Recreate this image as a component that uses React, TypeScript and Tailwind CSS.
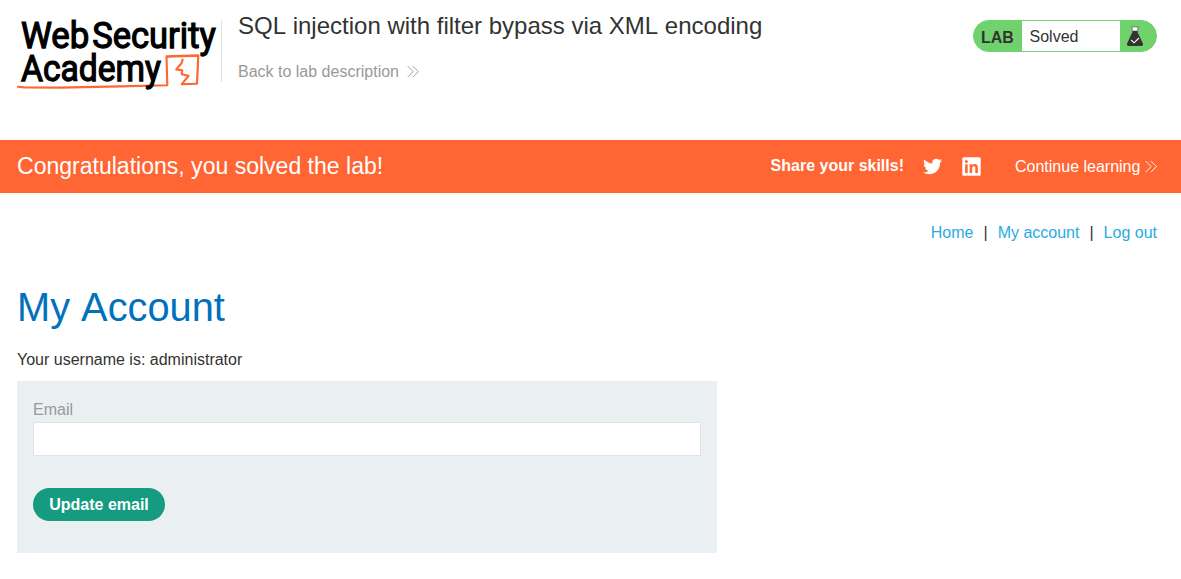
import React from "react";

function Logo() {
  const word = {
    fontFamily: "Roboto, 'Liberation Sans', sans-serif",
    fontWeight: 400,
    stroke: "#000",
    strokeWidth: 1.25,
    lengthAdjust: "spacingAndGlyphs" as const,
  };
  return (
    <svg width="204" height="76" viewBox="17 17 204 76" className="block shrink-0 overflow-visible" role="img" aria-label="Web Security Academy">
      <text x="21" y="48.2" fontSize="37" textLength="68.4" {...word}>Web</text>
      <text x="92.2" y="48.2" fontSize="37" textLength="123.6" {...word}>Security</text>
      <g fill="none" stroke="#ff6633" strokeLinejoin="round" strokeLinecap="round">
        <path d="M18 86.8 L24 87.4 L60 87.6 L120 86.4 L167.3 85.3 L166.5 56.2 L198.3 55.3 L197 83.8 L181.8 84.2 L188.6 75.8 L181.6 74.2 L182.3 70.4 L176.2 69.4 L181.7 63 L182.6 59.6" strokeWidth="2.1" />
        <path d="M167 57.2 L198 56 M183 84.3 L197 83.2 M198 56 L197.2 83" strokeWidth="1.3" />
      </g>
      <text x="21" y="80.7" fontSize="36.5" textLength="140" {...word}>Academy</text>
    </svg>
  );
}

function Chevrons() {
  return (
    <svg width="12" height="12" viewBox="0 0 12 12" className="block shrink-0" fill="none" stroke="currentColor" strokeWidth="0.9">
      <path d="M0.6 0 L6.2 5.6 L0.6 11.2 M5.8 0 L11.4 5.6 L5.8 11.2" />
    </svg>
  );
}

function Flask() {
  return (
    <svg width="18" height="22" viewBox="0 0 18 22" className="block">
      <path d="M6 1h6v6H6z" fill="#fff" />
      <path d="M5 0.2h8v1H5z" fill="#6d8b69" />
      <path d="M6.2 1v4M11.8 1v4" stroke="#55704f" strokeWidth="0.8" />
      <path d="M6.2 4.8h5.6v1.6l5 10.9q1 2.7-1.6 2.7H2.8q-2.6 0-1.6-2.7L6.2 6.4z" fill="#333332" />
      <path d="M5.2 14l2.8 2.8 5-4.8" fill="none" stroke="#fff" strokeWidth="1.1" />
    </svg>
  );
}

function Twitter() {
  return (
    <svg width="19" height="19" viewBox="0 0 24 24" fill="#fff" className="block">
      <path d="M23.953 4.57a10 10 0 01-2.825.775 4.958 4.958 0 002.163-2.723c-.951.555-2.005.959-3.127 1.184a4.92 4.92 0 00-8.384 4.482C7.69 8.095 4.067 6.13 1.64 3.162a4.822 4.822 0 00-.666 2.475c0 1.71.87 3.213 2.188 4.096a4.904 4.904 0 01-2.228-.616v.06a4.923 4.923 0 003.946 4.827 4.996 4.996 0 01-2.212.085 4.936 4.936 0 004.604 3.417 9.867 9.867 0 01-6.102 2.105c-.39 0-.779-.023-1.17-.067a13.995 13.995 0 007.557 2.209c9.053 0 13.998-7.496 13.998-13.985 0-.21 0-.42-.015-.63A9.935 9.935 0 0024 4.59z" />
    </svg>
  );
}

function LinkedIn() {
  return (
    <svg width="19" height="19" viewBox="0 0 19 19" className="block">
      <rect x="0.3" y="0.3" width="18.4" height="18.4" rx="1.5" fill="#fff" />
      <g fill="#ff6633">
        <circle cx="4.4" cy="4.5" r="1.5" />
        <path d="M3.1 7.2h2.6v8.7H3.1zM7.6 7.2h2.5v1.2c.5-.9 1.4-1.4 2.5-1.4 2.7 0 3.3 1.8 3.3 4.1v4.8h-2.6v-4.3c0-1 0-2.4-1.4-2.4s-1.7 1.1-1.7 2.3v4.4H7.6z" />
      </g>
    </svg>
  );
}

export default function App() {
  return (
    <div className="h-[579px] overflow-hidden bg-white font-['Liberation_Sans',Arial,sans-serif] text-base leading-5 text-[#333332]">
      <header className="flex h-[140px] items-start pr-6 pl-[17px]">
        <div className="pt-[17px]">
          <Logo />
        </div>
        <div className="mt-5 h-[62px] w-px shrink-0 bg-[#e0e0e0]" />
        <div className="flex-1 pl-4">
          <h2 className="pt-3 text-2xl leading-7 [font-kerning:none]">SQL injection with filter bypass via XML encoding</h2>
          <a className="mt-[22px] flex items-center gap-[8.5px] text-[#999]">
            <span className="leading-5">Back to lab description</span>
            <Chevrons />
          </a>
        </div>
        <div className="mt-5 flex h-8 w-[184px] overflow-hidden rounded-2xl border border-[#70d26d] bg-[#70d26d]">
          <span className="w-12 pt-[7px] pl-[7px] leading-5 font-bold [font-kerning:none]">LAB</span>
          <span className="w-[98px] bg-white pt-1.5 pl-[7.5px] leading-5">Solved</span>
          <span className="pt-[5px] pl-1.5">
            <Flask />
          </span>
        </div>
      </header>

      <section className="flex h-[53px] items-center bg-[#ff6633] pr-6 pl-[17px] text-white">
        <h4 className="flex-1 text-[23.04px] leading-[27px] [font-kerning:none]">Congratulations, you solved the lab!</h4>
        <span className="pb-px font-bold">Share your skills!</span>
        <a className="ml-[19px] pb-px"><Twitter /></a>
        <a className="ml-5"><LinkedIn /></a>
        <a className="ml-[34px] flex items-center gap-[4.6px]">
          <span className="pt-px">Continue learning</span>
          <Chevrons />
        </a>
      </section>

      <nav className="flex justify-end gap-[10px] pt-[30px] pr-6">
        <a className="text-[#29abe2]">Home</a>
        <span>|</span>
        <a className="text-[#29abe2]">My account</a>
        <span>|</span>
        <a className="text-[#29abe2]">Log out</a>
      </nav>

      <main className="pl-[17px]">
        <h1 className="mt-10 text-[39.81px] leading-[48px] text-[#0071bc] [font-kerning:none]">My Account</h1>
        <p className="mt-[19px] leading-5">Your username is: administrator</p>
        <form className="mt-[11px] h-[172px] w-[700px] bg-[#eaeff2] px-4 pt-[19px]">
          <label className="block leading-5 text-[#999]">Email</label>
          <input className="mt-0.5 block h-[34px] w-full border border-[#e0e4e5] bg-white px-2 outline-none" />
          <button type="button" className="mt-8 block h-[33px] w-[132px] rounded-full bg-[#159b80] text-center leading-[33px] font-bold text-white">Update email</button>
        </form>
      </main>
    </div>
  );
}
